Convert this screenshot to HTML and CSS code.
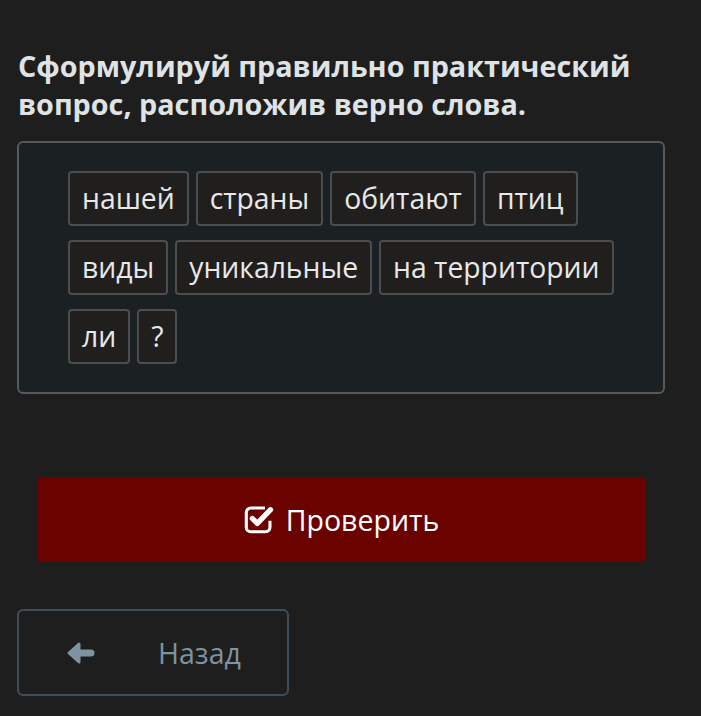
FILE: index.html
```html
<!DOCTYPE html>
<html lang="ru">
<head>
<meta charset="utf-8">
<link rel="stylesheet" href="styles.css">
</head>
<body>
<main class="page">
  <h1 class="title">Сформулируй правильно практический вопрос, расположив верно слова.</h1>
  <div class="board">
    <div class="row">
      <span class="word">нашей</span>
      <span class="word">страны</span>
      <span class="word">обитают</span>
      <span class="word">птиц</span>
    </div>
    <div class="row">
      <span class="word">виды</span>
      <span class="word">уникальные</span>
      <span class="word">на территории</span>
    </div>
    <div class="row">
      <span class="word">ли</span>
      <span class="word">?</span>
    </div>
  </div>
  <button class="check">
    <svg class="check-icon" viewBox="0 0 30 30" width="33" height="33">
      <path d="M20 5.5 H7 A4 4 0 0 0 3 9.5 V23 A4 4 0 0 0 7 27 H20.5 A4 4 0 0 0 24.5 23 V17" fill="none" stroke="#fff" stroke-width="2.8"/>
      <path d="M8.5 15 L13 19.5 L25 7" fill="none" stroke="#fff" stroke-width="4.8" stroke-linecap="round" stroke-linejoin="round"/>
    </svg>
    <span>Проверить</span>
  </button>
  <button class="back">
    <svg class="back-icon" viewBox="0 0 30 24" width="30" height="24">
      <path d="M14 3 L4 12 L14 21 Z" fill="#7d939f" stroke="#7d939f" stroke-width="3" stroke-linejoin="round"/>
      <line x1="12" y1="12" x2="26" y2="12" stroke="#7d939f" stroke-width="7" stroke-linecap="round"/>
    </svg>
    <span>Назад</span>
  </button>
</main>
</body>
</html>
```
FILE: styles.css
```css
html, body {
  margin: 0;
  padding: 0;
  background: #1e1e1e;
}
.page {
  font-family: "Open Sans", "Noto Sans", sans-serif;
  padding: 47px 0 0 17px;
  display: flex;
  flex-direction: column;
  align-items: flex-start;
}
.title {
  margin: 0 0 0 1px;
  font-size: 28.75px;
  font-weight: 700;
  line-height: 38px;
  color: #dfe3e6;
  letter-spacing: 0;
  width: 660px;
}
.board {
  margin-top: 18px;
  box-sizing: border-box;
  width: 648px;
  height: 253px;
  border: 2px solid #55595c;
  border-radius: 6px;
  background: #1b2023;
  padding: 28px 0 0 49px;
  display: flex;
  flex-direction: column;
  gap: 14px;
}
.row {
  display: flex;
  gap: 7px;
}
.word {
  box-sizing: border-box;
  height: 55px;
  padding: 0 12px;
  display: flex;
  align-items: center;
  background: #211f1e;
  border: 2px solid #4d4d4d;
  border-radius: 4px;
  color: #e8e8e8;
  font-size: 28.3px;
  line-height: 1;
}
.check {
  margin: 83px 0 0 20px;
  width: 608px;
  height: 85px;
  border: none;
  border-radius: 4px;
  background: #6a0300;
  color: #fff;
  font-family: inherit;
  font-size: 28.5px;
  display: flex;
  align-items: center;
  justify-content: center;
  gap: 10px;
  padding: 0;
}
.check-icon {
  margin-top: -3px;
  flex: none;
}
.back {
  margin-top: 47px;
  box-sizing: border-box;
  width: 272px;
  height: 87px;
  border: 2px solid #3e4f58;
  border-radius: 6px;
  background: #1e1e1e;
  color: #7d939f;
  font-family: inherit;
  font-size: 28.5px;
  display: flex;
  align-items: center;
  padding: 0 0 0 46px;
}
.back-icon {
  margin-right: 63px;
}
```
